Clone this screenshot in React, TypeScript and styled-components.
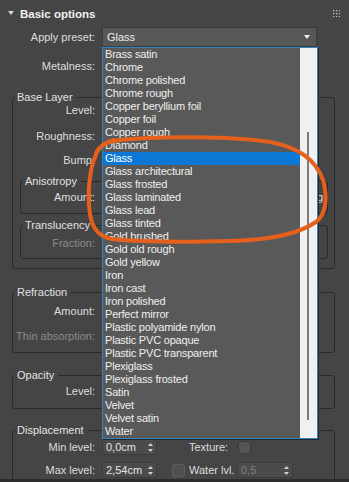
import styled, { createGlobalStyle } from "styled-components";

const GlobalStyle = createGlobalStyle`
  html, body { margin:0; padding:0; background:#454545; }
  body {
    font-family: "Liberation Sans", Arial, sans-serif;
    font-size: 11px;
    color: #dedede;
  }
  * { box-sizing: border-box; }
`

const Rollout = styled.div`
    position: relative;
    width: 349px;
    height: 482px;
    overflow: hidden;
    background: #454545;
    border-bottom: 3px solid #2d2d2d;
`
const Header = styled.div`
    height: 27px;
    display: flex;
    align-items: center;
    padding: 0 9px 0 8px;
`
const Caret = styled.span`
    width: 0;
    height: 0;
    border-left: 3px solid transparent;
    border-right: 3px solid transparent;
    border-top: 4px solid #d6d6d6;
    margin-right: 6px;
    margin-top: -2px;
`
const Title = styled.div`
    flex: 1;
    font-weight: bold;
    font-size: 11.5px;
    color: #f2f2f2;
`
const Row = styled.div<{ $h?: number; $mt?: number }>`
    display: flex;
    align-items: center;
    height: ${p => p.$h ?? 14}px;
    margin-top: ${p => p.$mt ?? 0}px;
`
const Label = styled.span<{ $w: number; $dim?: boolean }>`
    flex: none;
    width: ${p => p.$w}px;
    margin-right: 7px;
    text-align: right;
    white-space: nowrap;
    color: ${p => (p.$dim ? "#8b8b8b" : "#dedede")};
`
const Combo = styled.div`
    width: 215px;
    height: 20px;
    display: flex;
    align-items: center;
    justify-content: space-between;
    padding: 0 6px 0 4px;
    background: #575757;
    border: 1px solid #3b3b3b;
    color: #ececec;
`
const ComboArrow = styled.span`
    width: 0;
    height: 0;
    border-left: 3px solid transparent;
    border-right: 3px solid transparent;
    border-top: 4px solid #f0f0f0;
`
const Group = styled.fieldset<{ $ml: number; $mr: number; $mt: number; $pb: number }>`
    min-width: 0;
    margin: ${p => p.$mt}px ${p => p.$mr}px 0 ${p => p.$ml}px;
    padding: 0 0 ${p => p.$pb}px 0;
    border: 1px solid #2a2a2a;
    border-radius: 3px;
`
const Legend = styled.legend`
    margin-left: 2px;
    padding: 0 4px 0 2px;
    line-height: 12px;
    color: #e2e2e2;
`
const Spinner = styled.div<{ $w?: number; $off?: boolean; $ml?: number }>`
    flex: none;
    width: ${p => p.$w ?? 55}px;
    height: 16px;
    margin-left: ${p => p.$ml ?? 0}px;
    display: flex;
    align-items: center;
    justify-content: space-between;
    padding: 0 3px 0 3px;
    background: #4b4b4b;
    border: 1px solid #3c3c3c;
    border-radius: 2px;
    color: ${p => (p.$off ? "#7f7f7f" : "#e4e4e4")};
`
const CheckBox = styled.span<{ $hidden?: boolean }>`
    flex: none;
    width: 13px;
    height: 13px;
    margin-left: 15px;
    border-radius: 2px;
    background: #505050;
    border: 1px solid #5e5e5e;
    visibility: ${p => (p.$hidden ? "hidden" : "visible")};
`
const SideLabel = styled.span`
    flex: none;
    width: 45px;
    margin-left: 4px;
    white-space: nowrap;
`
const MapButton = styled.span`
    flex: none;
    width: 13px;
    height: 13px;
    margin-left: 4px;
    border-radius: 3px;
    background: #555;
    border: 1px solid #3a3a3a;
`
const SideNote = styled.span`
    margin-left: auto;
    padding-right: 4px;
`
const List = styled.div`
    position: absolute;
    top: 47px;
    left: 102px;
    width: 216px;
    height: 392px;
    display: flex;
    background: #595959;
    border: 1px solid #2f85c6;
    box-shadow: 1px 1px 0 #262626;
`
const Items = styled.ul`
    flex: 1;
    margin: 0;
    padding: 0;
    list-style: none;
`
const Item = styled.li<{ $sel?: boolean }>`
    height: 13px;
    line-height: 13px;
    padding-left: 2px;
    white-space: nowrap;
    letter-spacing: -0.2px;
    background: ${p => (p.$sel ? "#0b78d6" : "transparent")};
    color: ${p => (p.$sel ? "#ffffff" : "#efefef")};
`
const ScrollBar = styled.div`
    flex: none;
    width: 17px;
    padding: 84px 0 0 7px;
    background: #f0f0f0;
`
const Thumb = styled.div`
    width: 2px;
    height: 288px;
    background: #7b7b7b;
`
const Annotation = styled.svg`
    position: absolute;
    top: 0;
    left: 0;
    pointer-events: none;
`

const presets = [
    "Brass satin", "Chrome", "Chrome polished", "Chrome rough", "Copper beryllium foil",
    "Copper foil", "Copper rough", "Diamond", "Glass", "Glass architectural",
    "Glass frosted", "Glass laminated", "Glass lead", "Glass tinted", "Gold brushed",
    "Gold old rough", "Gold yellow", "Iron", "Iron cast", "Iron polished",
    "Perfect mirror", "Plastic polyamide nylon", "Plastic PVC opaque", "Plastic PVC transparent", "Plexiglass",
    "Plexiglass frosted", "Satin", "Velvet", "Velvet satin", "Water",
];

const Arrows = () => (
    <svg width="5" height="9" viewBox="0 0 5 9">
        <path d="M2.5 0 L5 3 L0 3 Z M0 6 L5 6 L2.5 9 Z" fill="#cfcfcf" />
    </svg>
);

const Grip = () => (
    <svg width="7" height="7" viewBox="0 0 7 7">
        {[0, 3, 6].map(y => [0, 3, 6].map(x => (
            <rect key={`${x}-${y}`} x={x} y={y} width="1.3" height="1.3" fill="#bdbdbd" />
        )))}
    </svg>
);

// controls under the open preset list are covered by it, so only their labels are laid out
const App = () => {
    return <>
        <GlobalStyle />
        <Rollout>
            <Header>
                <Caret />
                <Title>Basic options</Title>
                <Grip />
            </Header>
            <Row $h={20}>
                <Label $w={95}>Apply preset:</Label>
                <Combo>Glass<ComboArrow /></Combo>
            </Row>
            <Row $h={20} $mt={9}>
                <Label $w={95}>Metalness:</Label>
            </Row>

            <Group $ml={12} $mr={14} $mt={15} $pb={9}>
                <Legend>Base Layer</Legend>
                <Row>
                    <Label $w={82}>Level:</Label>
                </Row>
                <Row $mt={12}>
                    <Label $w={82}>Roughness:</Label>
                </Row>
                <Row $mt={10}>
                    <Label $w={82}>Bump:</Label>
                </Row>
                <Group $ml={7} $mr={6} $mt={8} $pb={9}>
                    <Legend>Anisotropy</Legend>
                    <Row $mt={3}>
                        <Label $w={74}>Amount:</Label>
                        <SideNote>g</SideNote>
                    </Row>
                </Group>
                <Group $ml={7} $mr={6} $mt={5} $pb={8}>
                    <Legend>Translucency</Legend>
                    <Row $mt={5}>
                        <Label $w={74} $dim>Fraction:</Label>
                    </Row>
                </Group>
            </Group>

            <Group $ml={12} $mr={14} $mt={17} $pb={9}>
                <Legend>Refraction</Legend>
                <Row $mt={6}>
                    <Label $w={82}>Amount:</Label>
                </Row>
                <Row $mt={11}>
                    <Label $w={82} $dim>Thin absorption:</Label>
                </Row>
            </Group>

            <Group $ml={12} $mr={14} $mt={16} $pb={10}>
                <Legend>Opacity</Legend>
                <Row $mt={3}>
                    <Label $w={82}>Level:</Label>
                </Row>
            </Group>

            <Group $ml={12} $mr={14} $mt={15} $pb={10}>
                <Legend>Displacement</Legend>
                <Row $h={16} $mt={3}>
                    <Label $w={82}>Min level:</Label>
                    <Spinner>0,0cm<Arrows /></Spinner>
                    <CheckBox $hidden />
                    <SideLabel>Texture:</SideLabel>
                    <MapButton />
                </Row>
                <Row $h={16} $mt={7}>
                    <Label $w={82}>Max level:</Label>
                    <Spinner>2,54cm<Arrows /></Spinner>
                    <CheckBox />
                    <SideLabel>Water lvl.</SideLabel>
                    <Spinner $w={56} $off $ml={3}>0,5<Arrows /></Spinner>
                </Row>
            </Group>

            <List>
                <Items>
                    {presets.map(name => (
                        <Item key={name} $sel={name === "Glass"}>{name}</Item>
                    ))}
                </Items>
                <ScrollBar><Thumb /></ScrollBar>
            </List>

            <Annotation width="349" height="482" viewBox="0 0 349 482">
                <path
                    d="M 95 158 C 96 148, 103 142, 120 140 C 160 136, 230 136, 270 142 C 298 147, 316 160, 323 180 C 328 198, 326 214, 316 222 C 300 233, 270 240, 230 241 C 190 242, 140 242, 112 239 C 96 236, 90 225, 89 205 C 88 185, 91 165, 97 152 C 100 146, 106 142, 114 140"
                    fill="none"
                    stroke="#e5601d"
                    strokeWidth="4"
                    strokeLinecap="round"
                />
            </Annotation>
        </Rollout>
    </>
}

export default App;
